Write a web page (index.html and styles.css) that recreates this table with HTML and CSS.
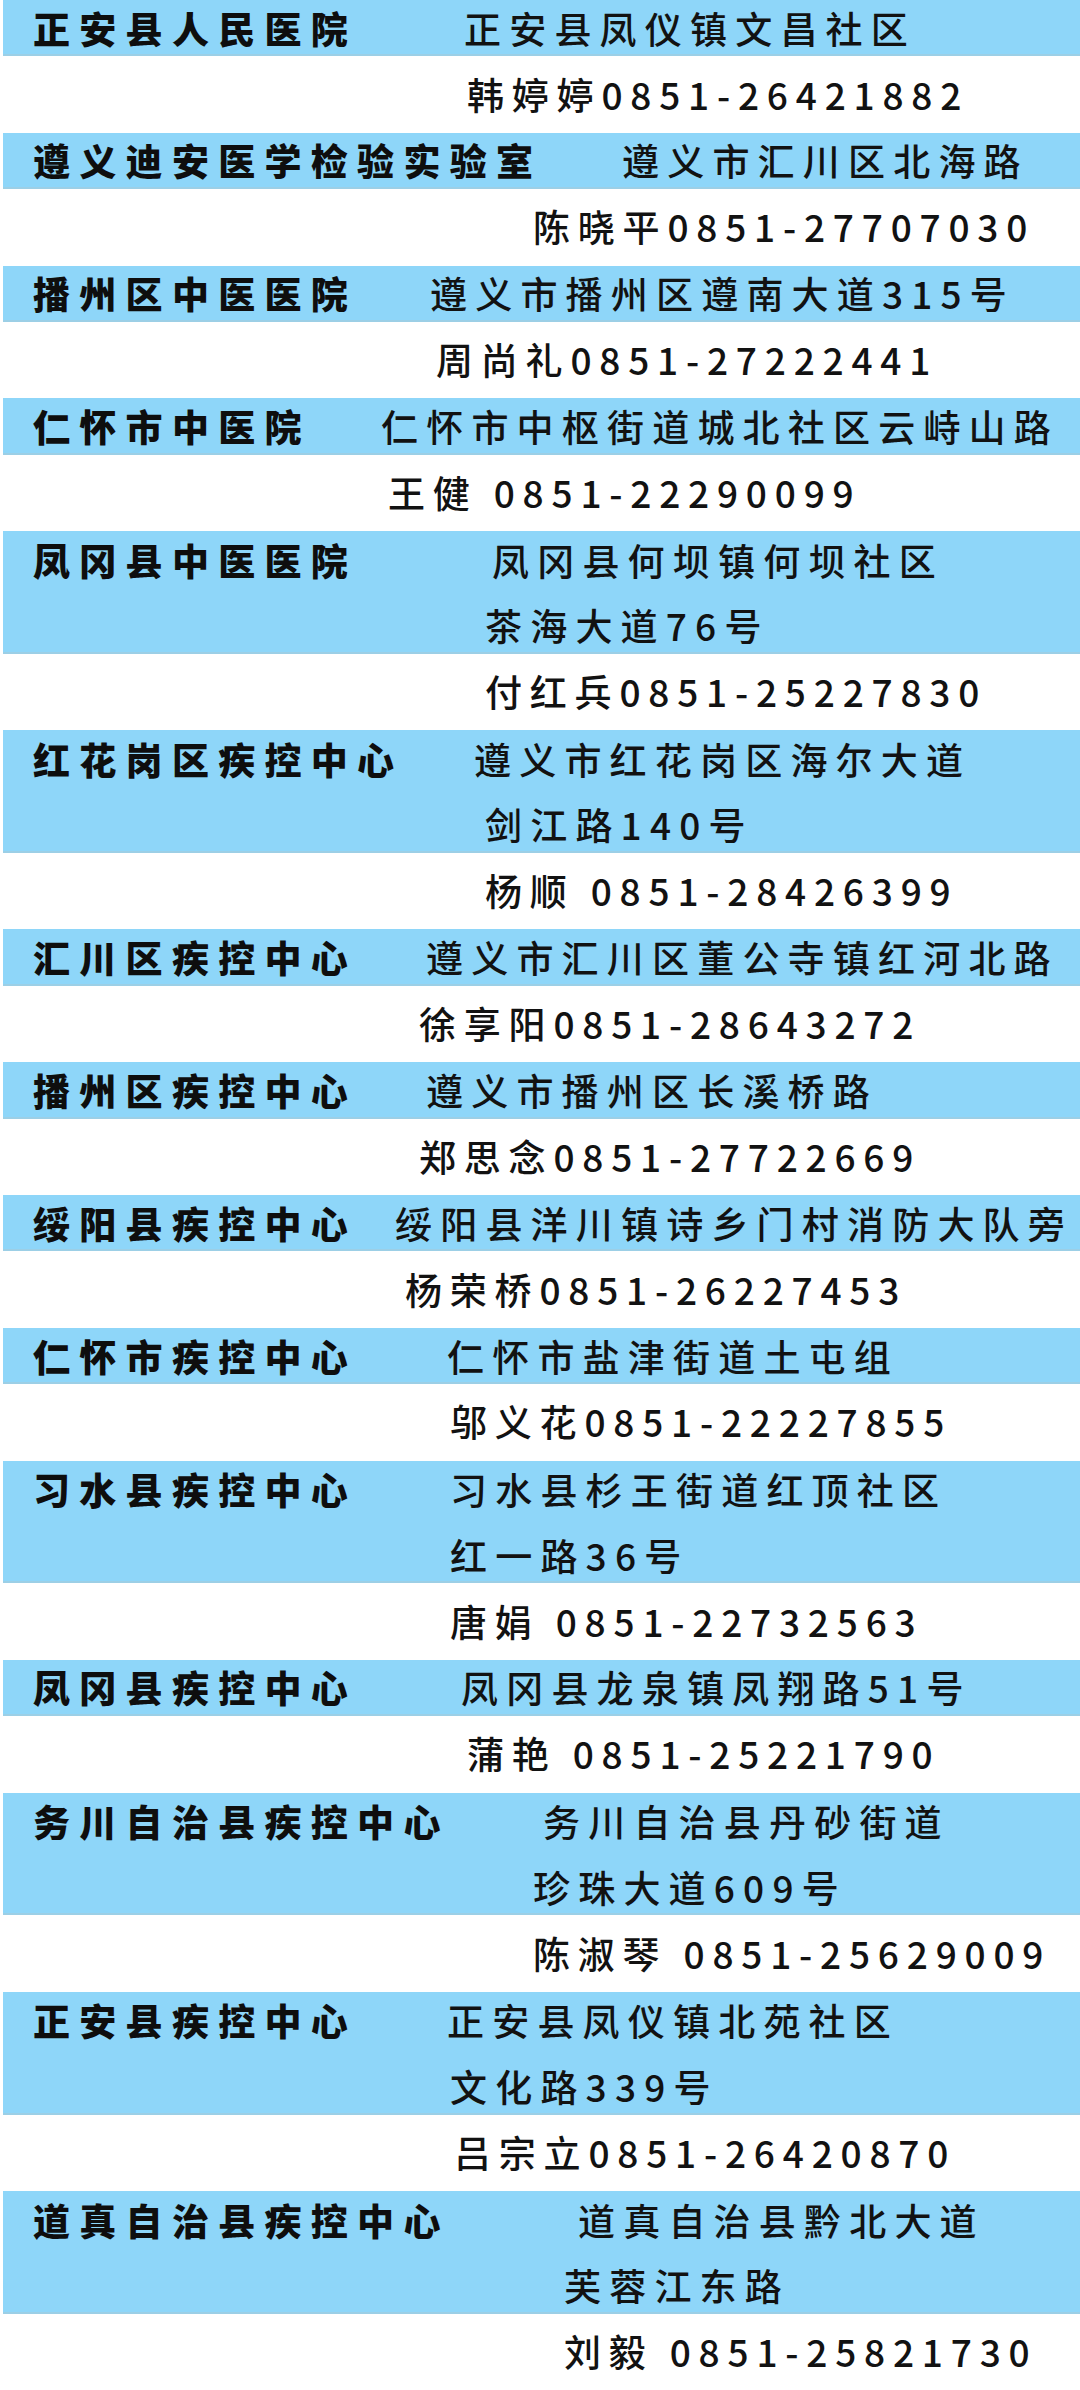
FILE: index.html
```html
<!DOCTYPE html>
<html lang="zh-CN">
<head>
<meta charset="utf-8">
<title>核酸检测机构</title>
<link rel="stylesheet" href="styles.css">
</head>
<body>
<div class="list">

  <div class="entry e1">
    <div class="band"><div class="line a1"><span class="name">正安县人民医院</span><span class="txt">正安县凤仪镇文昌社区</span></div></div>
    <div class="white"><div class="line p"><span></span><span class="txt">韩婷婷0851-26421882</span></div></div>
  </div>

  <div class="entry e2">
    <div class="band"><div class="line a1"><span class="name">遵义迪安医学检验实验室</span><span class="txt">遵义市汇川区北海路</span></div></div>
    <div class="white"><div class="line p"><span></span><span class="txt">陈晓平0851-27707030</span></div></div>
  </div>

  <div class="entry e3">
    <div class="band"><div class="line a1"><span class="name">播州区中医医院</span><span class="txt">遵义市播州区遵南大道315号</span></div></div>
    <div class="white"><div class="line p"><span></span><span class="txt">周尚礼0851-27222441</span></div></div>
  </div>

  <div class="entry e4">
    <div class="band"><div class="line a1"><span class="name">仁怀市中医院</span><span class="txt">仁怀市中枢街道城北社区云峙山路</span></div></div>
    <div class="white"><div class="line p"><span></span><span class="txt">王健 0851-22290099</span></div></div>
  </div>

  <div class="entry e5">
    <div class="band">
      <div class="line a1"><span class="name">凤冈县中医医院</span><span class="txt">凤冈县何坝镇何坝社区</span></div>
      <div class="line a2"><span></span><span class="txt">茶海大道76号</span></div>
    </div>
    <div class="white"><div class="line p"><span></span><span class="txt">付红兵0851-25227830</span></div></div>
  </div>

  <div class="entry e6">
    <div class="band">
      <div class="line a1"><span class="name">红花岗区疾控中心</span><span class="txt">遵义市红花岗区海尔大道</span></div>
      <div class="line a2"><span></span><span class="txt">剑江路140号</span></div>
    </div>
    <div class="white"><div class="line p"><span></span><span class="txt">杨顺 0851-28426399</span></div></div>
  </div>

  <div class="entry e7">
    <div class="band"><div class="line a1"><span class="name">汇川区疾控中心</span><span class="txt">遵义市汇川区董公寺镇红河北路</span></div></div>
    <div class="white"><div class="line p"><span></span><span class="txt">徐享阳0851-28643272</span></div></div>
  </div>

  <div class="entry e8">
    <div class="band"><div class="line a1"><span class="name">播州区疾控中心</span><span class="txt">遵义市播州区长溪桥路</span></div></div>
    <div class="white"><div class="line p"><span></span><span class="txt">郑思念0851-27722669</span></div></div>
  </div>

  <div class="entry e9">
    <div class="band"><div class="line a1"><span class="name">绥阳县疾控中心</span><span class="txt">绥阳县洋川镇诗乡门村消防大队旁</span></div></div>
    <div class="white"><div class="line p"><span></span><span class="txt">杨荣桥0851-26227453</span></div></div>
  </div>

  <div class="entry e10">
    <div class="band"><div class="line a1"><span class="name">仁怀市疾控中心</span><span class="txt">仁怀市盐津街道土屯组</span></div></div>
    <div class="white"><div class="line p"><span></span><span class="txt">邬义花0851-22227855</span></div></div>
  </div>

  <div class="entry e11">
    <div class="band">
      <div class="line a1"><span class="name">习水县疾控中心</span><span class="txt">习水县杉王街道红顶社区</span></div>
      <div class="line a2"><span></span><span class="txt">红一路36号</span></div>
    </div>
    <div class="white"><div class="line p"><span></span><span class="txt">唐娟 0851-22732563</span></div></div>
  </div>

  <div class="entry e12">
    <div class="band"><div class="line a1"><span class="name">凤冈县疾控中心</span><span class="txt">凤冈县龙泉镇凤翔路51号</span></div></div>
    <div class="white"><div class="line p"><span></span><span class="txt">蒲艳 0851-25221790</span></div></div>
  </div>

  <div class="entry e13">
    <div class="band">
      <div class="line a1"><span class="name">务川自治县疾控中心</span><span class="txt">务川自治县丹砂街道</span></div>
      <div class="line a2"><span></span><span class="txt">珍珠大道609号</span></div>
    </div>
    <div class="white"><div class="line p"><span></span><span class="txt">陈淑琴 0851-25629009</span></div></div>
  </div>

  <div class="entry e14">
    <div class="band">
      <div class="line a1"><span class="name">正安县疾控中心</span><span class="txt">正安县凤仪镇北苑社区</span></div>
      <div class="line a2"><span></span><span class="txt">文化路339号</span></div>
    </div>
    <div class="white"><div class="line p"><span></span><span class="txt">吕宗立0851-26420870</span></div></div>
  </div>

  <div class="entry e15">
    <div class="band">
      <div class="line a1"><span class="name">道真自治县疾控中心</span><span class="txt">道真自治县黔北大道</span></div>
      <div class="line a2"><span></span><span class="txt">芙蓉江东路</span></div>
    </div>
    <div class="white"><div class="line p"><span></span><span class="txt">刘毅 0851-25821730</span></div></div>
  </div>

</div>
</body>
</html>
```

FILE: styles.css
```css
html, body {
  margin: 0;
  padding: 0;
  background: #ffffff;
}

body {
  width: 1080px;
  font-family: "Noto Sans CJK SC", "Noto Sans", sans-serif;
  color: #121212;
  font-size: 37px;
}

.list {
  display: flex;
  flex-direction: column;
}

.band {
  background: #8ed6f9;
  box-shadow: inset 3px 0 0 #ffffff, inset 0 -2px 0 #9ccfe6;
}

.white {
  background: #ffffff;
}

.line {
  --x: 460px;
  display: grid;
  grid-template-columns: var(--x) auto;
  align-items: center;
  box-sizing: border-box;
  white-space: nowrap;
  line-height: 1;
}

.band .line {
  height: 66.4px;
  padding-bottom: 8px;
}

.band .line:last-child {
  height: 56.4px;
  padding-bottom: 0;
}

.white .line {
  height: 76.4px;
  padding-bottom: 1px;
}

.name {
  padding-left: 33px;
  font-weight: 900;
  letter-spacing: 9.3px;
  color: #0e0e0e;
}

.txt {
  font-weight: 500;
  letter-spacing: 8.2px;
}

.p .txt {
  letter-spacing: 7.8px;
}

/* per-entry column offsets (hand-aligned in the original) */
.e1 .a1 { --x: 464px; }
.e1 .p  { --x: 467px; }
.e2 .a1 { --x: 622px; }
.e2 .p  { --x: 533px; }
.e3 .a1 { --x: 430px; }
.e3 .p  { --x: 436px; }
.e4 .a1 { --x: 381px; }
.e4 .p  { --x: 388px; }
.e5 .a1 { --x: 492px; }
.e5 .a2 { --x: 485px; }
.e5 .p  { --x: 485px; }
.e6 .a1 { --x: 474px; }
.e6 .a2 { --x: 485px; }
.e6 .p  { --x: 485px; }
.e7 .a1 { --x: 426px; }
.e7 .p  { --x: 419px; }
.e8 .a1 { --x: 426px; }
.e8 .p  { --x: 419px; }
.e9 .a1 { --x: 395px; }
.e9 .p  { --x: 405px; }
.e10 .a1 { --x: 447px; }
.e10 .p  { --x: 450px; }
.e11 .a1 { --x: 450px; }
.e11 .a2 { --x: 450px; }
.e11 .p  { --x: 450px; }
.e12 .a1 { --x: 461px; }
.e12 .p  { --x: 467px; }
.e13 .a1 { --x: 543px; }
.e13 .a2 { --x: 533px; }
.e13 .p  { --x: 533px; }
.e14 .a1 { --x: 447px; }
.e14 .a2 { --x: 450px; }
.e14 .p  { --x: 454px; }
.e15 .a1 { --x: 578px; }
.e15 .a2 { --x: 564px; }
.e15 .p  { --x: 564px; }
```
